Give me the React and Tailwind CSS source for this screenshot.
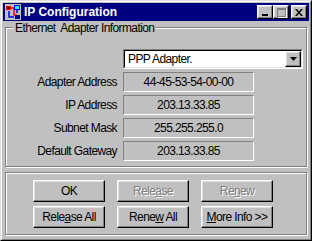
const raised =
  'border border-t-white border-l-white border-r-black border-b-black shadow-[inset_-1px_-1px_#808080,inset_1px_1px_#dfdfdf]';

function TitleButton({ children }) {
  return (
    <div className={`w-[16px] h-[14px] bg-[#c0c0c0] flex items-center justify-center ${raised}`}>
      {children}
    </div>
  );
}

function AppIcon() {
  return (
    <svg width="16" height="16" viewBox="0 0 16 16" className="shrink-0">
      <rect x="0" y="0" width="16" height="16" fill="#c0c0c0" />
      <rect x="1" y="2" width="5" height="4" fill="#ff0000" />
      <rect x="2" y="3" width="3" height="2" fill="#800000" />
      <path d="M6 4 H9 V11 H12" stroke="#ff0000" strokeWidth="1.5" fill="none" />
      <rect x="9" y="1" width="6" height="5" fill="#0000ff" />
      <rect x="10" y="2" width="4" height="3" fill="#00ffff" />
      <path d="M12 6 V9 M4 7 V13 H9" stroke="#0000ff" strokeWidth="1.5" fill="none" />
      <rect x="10" y="11" width="5" height="4" fill="#000080" />
    </svg>
  );
}

function ValueBox({ children }) {
  return (
    <div className="w-[131px] h-[20px] border border-t-[#808080] border-l-[#808080] border-b-white border-r-white flex items-center justify-center">
      {children}
    </div>
  );
}

function Row({ label, value }) {
  return (
    <div className="flex items-center">
      <div className="w-[111px] text-right">{label}</div>
      <div className="w-[6px]" />
      <ValueBox>{value}</ValueBox>
    </div>
  );
}

function Btn({ children, disabled }) {
  return (
    <div
      className={`w-[72px] h-[22px] bg-[#c0c0c0] flex items-center justify-center ${raised} ${
        disabled ? 'text-[#808080] [text-shadow:1px_1px_0_#ffffff]' : 'text-black'
      }`}
    >
      {children}
    </div>
  );
}

export default function App() {
  return (
    <div className="w-[312px] h-[241px] bg-[#c0c0c0] border border-t-[#dfdfdf] border-l-[#dfdfdf] border-r-black border-b-black font-['Liberation_Sans',Arial,sans-serif] text-[12px] tracking-[-0.6px] text-black leading-none select-none">
      <div className="h-full border border-t-white border-l-white border-r-[#808080] border-b-[#808080] p-[1px] flex flex-col">
        {/* title bar */}
        <div className="h-[18px] bg-[#000080] flex items-center pl-[2px] pr-[2px] shrink-0">
          <AppIcon />
          <span className="ml-[3px] text-white font-bold text-[12px] tracking-normal">IP Configuration</span>
          <div className="ml-auto flex items-center">
            <TitleButton>
              <div className="w-[6px] h-[2px] bg-black mt-[6px] mr-[1px]" />
            </TitleButton>
            <TitleButton>
              <div className="w-[9px] h-[9px] border border-[#808080] border-t-2 shadow-[1px_1px_0_#ffffff]" />
            </TitleButton>
            <div className="w-[2px]" />
            <TitleButton>
              <svg width="8" height="7" viewBox="0 0 8 7">
                <path d="M0 0 H2 L4 2.5 L6 0 H8 L5 3.5 L8 7 H6 L4 4.5 L2 7 H0 L3 3.5 Z" fill="#000" />
              </svg>
            </TitleButton>
          </div>
        </div>

        {/* adapter information group */}
        <div className="relative mt-[6px] mx-[2px] h-[140px] border border-[#808080] shadow-[inset_1px_1px_#ffffff,1px_1px_#ffffff]">
          <span className="absolute left-[7px] top-[-6px] bg-[#c0c0c0] px-[2px]">Ethernet&nbsp; Adapter Information</span>
          <div className="pt-[21px] flex flex-col">
            <div className="flex">
              <div className="w-[117px]" />
              <div className="w-[180px] h-[20px] bg-white border border-t-[#808080] border-l-[#808080] border-b-white border-r-white">
                <div className="h-full flex items-center border border-t-black border-l-black border-b-[#dfdfdf] border-r-[#dfdfdf]">
                  <span className="pl-[3px] flex-1">PPP Adapter.</span>
                  <div className={`w-[16px] h-[16px] bg-[#c0c0c0] flex items-center justify-center ${raised}`}>
                    <svg width="7" height="4" viewBox="0 0 7 4">
                      <path d="M0 0 H7 L3.5 4 Z" fill="#000" />
                    </svg>
                  </div>
                </div>
              </div>
            </div>
            <div className="mt-[3px] flex flex-col gap-[3px]">
              <Row label="Adapter Address" value="44-45-53-54-00-00" />
              <Row label="IP Address" value="203.13.33.85" />
              <Row label="Subnet Mask" value="255.255.255.0" />
              <Row label="Default Gateway" value="203.13.33.85" />
            </div>
          </div>
        </div>

        {/* buttons group */}
        <div className="mt-[5px] mx-[2px] h-[63px] border border-[#808080] shadow-[inset_1px_1px_#ffffff,1px_1px_#ffffff] pt-[7px] pl-[27px] flex flex-col gap-[4px]">
          <div className="flex gap-[12px]">
            <Btn>OK</Btn>
            <Btn disabled>
              <span>
                Rele<span className="underline">a</span>se
              </span>
            </Btn>
            <Btn disabled>
              <span>
                Re<span className="underline">n</span>ew
              </span>
            </Btn>
          </div>
          <div className="flex gap-[12px]">
            <Btn>
              <span>
                Rele<span className="underline">a</span>se All
              </span>
            </Btn>
            <Btn>
              <span>
                Rene<span className="underline">w</span> All
              </span>
            </Btn>
            <Btn>
              <span>
                <span className="underline">M</span>ore Info &gt;&gt;
              </span>
            </Btn>
          </div>
        </div>
      </div>
    </div>
  );
}
